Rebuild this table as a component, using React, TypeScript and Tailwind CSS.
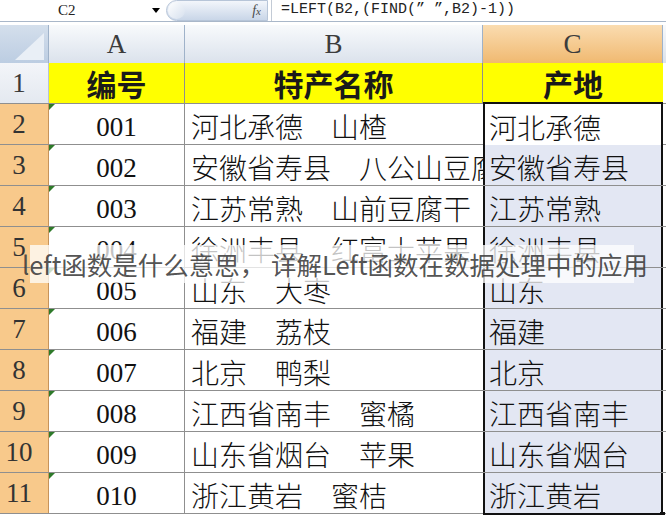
import React from "react";

const serif = "font-['Liberation_Serif','Noto_Sans_CJK_SC',serif]";
const cjk = "font-['Noto_Sans_CJK_SC',sans-serif]";

const rows = [
  { n: "2", id: "001", name: "河北承德　山楂", place: "河北承德" },
  { n: "3", id: "002", name: "安徽省寿县　八公山豆腐", place: "安徽省寿县" },
  { n: "4", id: "003", name: "江苏常熟　山前豆腐干", place: "江苏常熟" },
  { n: "5", id: "004", name: "徐洲丰县　红富士苹果", place: "徐洲丰县" },
  { n: "6", id: "005", name: "山东　大枣", place: "山东" },
  { n: "7", id: "006", name: "福建　荔枝", place: "福建" },
  { n: "8", id: "007", name: "北京　鸭梨", place: "北京" },
  { n: "9", id: "008", name: "江西省南丰　蜜橘", place: "江西省南丰" },
  { n: "10", id: "009", name: "山东省烟台　苹果", place: "山东省烟台" },
  { n: "11", id: "010", name: "浙江黄岩　蜜桔", place: "浙江黄岩" },
];

function FormulaBar() {
  return (
    <div className="flex h-[22px] items-center border-b border-[#a9b7c9] bg-white">
      <div className="flex w-[166px] items-center">
        <span className={`ml-[58px] text-[15px] text-[#222] ${serif}`}>C2</span>
        <span className="ml-auto mr-[6px] h-0 w-0 border-x-[4px] border-t-[5px] border-x-transparent border-t-black" />
      </div>
      <div className="relative flex h-[21px] w-[102px] items-center rounded-l-full rounded-r-[3px] border border-[#b7c5d8] bg-gradient-to-b from-[#f3f6fb] to-[#c9d6e8]">
        <span className="absolute left-[1px] top-[1px] h-[17px] w-[17px] rounded-full bg-gradient-to-br from-white to-[#d6e0ee]" />
        <span className={`ml-auto mr-[6px] text-[14px] italic text-[#4a4a4a] ${serif}`}>
          f<span className="text-[11px]">x</span>
        </span>
      </div>
      <div className="ml-[3px] h-full w-px bg-[#c3cbd6]" />
      <div className="ml-[9px] font-['Liberation_Mono',monospace] text-[15px] text-[#222]">
        =LEFT(B2,(FIND(” ”,B2)-1))
      </div>
    </div>
  );
}

function HeaderRow() {
  const col = "flex h-full items-center justify-center border-r border-[#9fb2c9] text-[27px] text-[#3c3c3c]";
  return (
    <div className="bg-white pt-[3px]">
      <div className={`flex h-[38px] ${serif}`}>
        <div className="relative w-[49px] border-r border-[#9fb2c9] bg-gradient-to-b from-[#d4dfec] to-[#bccde2]">
          <svg className="absolute inset-0" width="48" height="38" viewBox="0 0 48 38">
            <polygon points="44,8 44,35 15,35" fill="#e9eff6" />
          </svg>
        </div>
        <div className={`w-[136px] bg-gradient-to-b from-[#f8fafc] to-[#dbe2ec] ${col}`}>A</div>
        <div className={`w-[298px] bg-gradient-to-b from-[#f8fafc] to-[#dbe2ec] ${col}`}>B</div>
        <div className={`w-[180px] bg-gradient-to-b from-[#fadcb0] to-[#f0b970] ${col}`}>C</div>
        <div className="flex-1 bg-gradient-to-b from-[#f8fafc] to-[#dbe2ec]" />
      </div>
    </div>
  );
}

function TitleRow() {
  return (
    <div className="flex h-[41px] border-b border-[#8f8f8f]">
      <div className={`flex w-[49px] items-center justify-center border-r border-[#b9c4d3] bg-gradient-to-b from-[#f3f5f9] to-[#e4e9f0] pr-[10px] text-[27px] text-[#3a3a3a] ${serif}`}>
        1
      </div>
      <div className={`flex w-[136px] items-center justify-center border-r border-[#8f8f8f] bg-[#ffff00] text-[30px] font-bold text-[#1a1a1a] ${cjk}`}>
        编号
      </div>
      <div className={`flex w-[298px] items-center justify-center border-r border-[#8f8f8f] bg-[#ffff00] text-[30px] font-bold text-[#1a1a1a] ${cjk}`}>
        特产名称
      </div>
      <div className={`flex w-[180px] items-center justify-center bg-[#ffff00] text-[30px] font-bold text-[#1a1a1a] ${cjk}`}>
        产地
      </div>
      <div className="flex-1 bg-white" />
    </div>
  );
}

function DataRow({ r, first, last }: { r: (typeof rows)[number]; first: boolean; last: boolean }) {
  return (
    <div className="flex h-[41px] border-b border-[#8f8f8f]">
      <div className={`flex w-[49px] items-center justify-center border-r border-[#c7935a] bg-[#f8c98b] pr-[10px] text-[27px] leading-none text-[#333] ${serif}`}>
        {r.n}
      </div>
      <div className={`relative flex w-[136px] items-center justify-center border-r border-[#8f8f8f] bg-white pt-[6px] text-[27px] text-[#111] ${serif}`}>
        <span className="absolute left-0 top-0 h-0 w-0 border-r-[6px] border-t-[6px] border-r-transparent border-t-[#2e7a2a]" />
        {r.id}
      </div>
      <div className={`flex w-[298px] items-center overflow-hidden whitespace-nowrap bg-white pl-[6px] pt-[4px] text-[28px] font-light text-[#111] ${cjk}`}>
        {r.name}
      </div>
      <div
        className={`relative flex w-[180px] items-center border-x-2 border-[#111] pl-[4px] pt-[4px] text-[28px] font-light text-[#111] ${cjk} ${
          first ? "-mt-[2px] h-[43px] border-t-2 bg-white" : "bg-[#e3e7f3]"
        } ${last ? "-mb-px h-[42px] border-b-2" : ""}`}
      >
        {r.place}
        {last && <span className="absolute -bottom-[4px] -right-[4px] h-[5px] w-[5px] bg-[#111]" />}
      </div>
      <div className="flex-1 bg-white" />
    </div>
  );
}

export default function App() {
  return (
    <div className="relative h-[515px] w-[666px] overflow-hidden bg-white">
      <FormulaBar />
      <HeaderRow />
      <TitleRow />
      {rows.map((r, i) => (
        <DataRow key={r.n} r={r} first={i === 0} last={i === rows.length - 1} />
      ))}
      <div className="absolute left-[30px] top-[245px] h-[38px] w-[604px] bg-white/75" />
      <div className={`absolute left-[22px] top-[245px] whitespace-nowrap text-[25.5px] leading-[38px] text-[#3d3d3d]/90 ${cjk}`}>
        left函数是什么意思， 详解Left函数在数据处理中的应用
      </div>
    </div>
  );
}
